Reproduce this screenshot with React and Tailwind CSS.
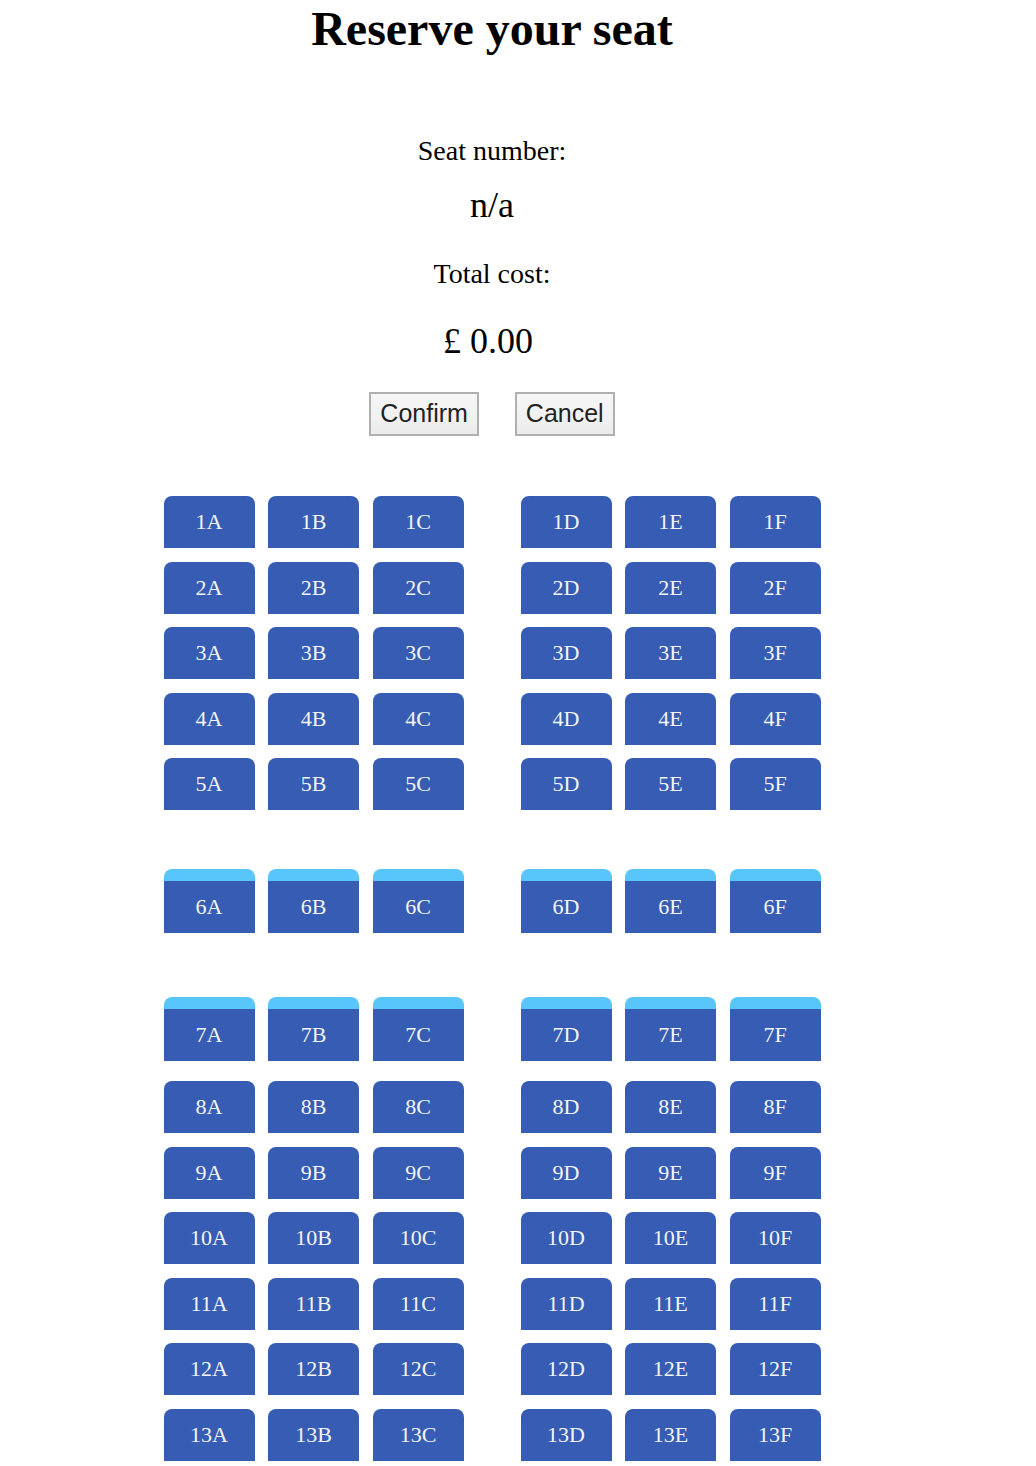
import { useState } from 'react';

const rows = [1, 2, 3, 4, 5, 6, 7, 8, 9, 10, 11, 12, 13];
const exitRows = [6, 7];

// vertical spacing above each row, taken from the layout
const rowMargin = {
  1: 'mt-0',
  2: 'mt-[13.5px]',
  3: 'mt-[13.5px]',
  4: 'mt-[13.5px]',
  5: 'mt-[13.5px]',
  6: 'mt-[59px]',
  7: 'mt-[64px]',
  8: 'mt-[20px]',
  9: 'mt-[13.5px]',
  10: 'mt-[13.5px]',
  11: 'mt-[13.5px]',
  12: 'mt-[13.5px]',
  13: 'mt-[13.5px]',
};

const Seat = ({ id, exit, onPick }) => (
  <button
    onClick={() => onPick(id)}
    className={`w-[91px] h-[52px] bg-[#365cb3] text-[#f4f4f4] text-[22px] leading-[52px] rounded-t-[8px] box-content ${
      exit ? 'border-t-[12px] border-[#58c6fb]' : ''
    }`}
    style={{ fontFamily: '"Liberation Serif", "Times New Roman", serif' }}
  >
    {id}
  </button>
);

const SeatRow = ({ row, onPick }) => {
  const exit = exitRows.includes(row);
  return (
    <div className={`flex gap-[57px] ${rowMargin[row]}`}>
      <div className="flex gap-[13.5px]">
        {['A', 'B', 'C'].map((l) => (
          <Seat key={l} id={`${row}${l}`} exit={exit} onPick={onPick} />
        ))}
      </div>
      <div className="flex gap-[13.5px]">
        {['D', 'E', 'F'].map((l) => (
          <Seat key={l} id={`${row}${l}`} exit={exit} onPick={onPick} />
        ))}
      </div>
    </div>
  );
};

const App = () => {
  const [seat, setSeat] = useState(null);

  return (
    <div
      className="w-[984px] text-black text-center"
      style={{ fontFamily: '"Liberation Serif", "Times New Roman", serif' }}
    >
      <h1 className="pt-[5px] text-[48px] leading-[48px] font-bold">Reserve your seat</h1>

      <div className="mt-[84px] text-[28px] leading-[28px]">Seat number:</div>
      <div className="mt-[22px] text-[36px] leading-[36px]">{seat || 'n/a'}</div>
      <div className="mt-[37px] text-[28px] leading-[28px]">Total cost:</div>
      <div className="mt-[35px] pr-[8px] text-[36px] leading-[36px]">£&nbsp;0.00</div>

      <div
        className="mt-[33px] flex justify-center gap-[36px]"
        style={{ fontFamily: '"Liberation Sans", Arial, sans-serif' }}
      >
        <button className="h-[44px] px-[9px] text-[25px] text-[#222] border-2 border-[#b0b0b0] bg-gradient-to-b from-[#f7f7f7] to-[#ececec]">
          Confirm
        </button>
        <button className="h-[44px] px-[9px] text-[25px] text-[#222] border-2 border-[#b0b0b0] bg-gradient-to-b from-[#f7f7f7] to-[#ececec]">
          Cancel
        </button>
      </div>

      <div className="mt-[60px] flex flex-col items-center">
        {rows.map((r) => (
          <SeatRow key={r} row={r} onPick={setSeat} />
        ))}
      </div>
    </div>
  );
};

export default App;
